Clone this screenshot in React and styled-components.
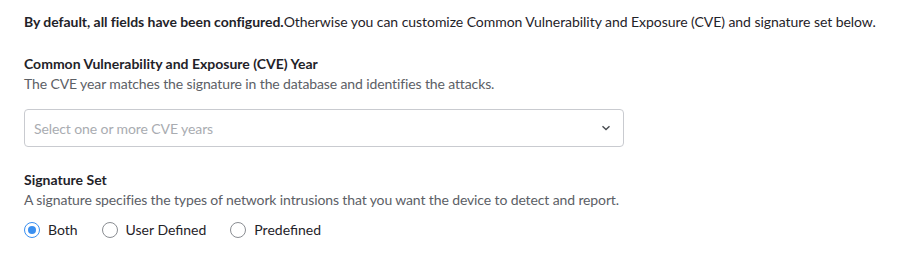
import React, { useState } from 'react'
import styled, { createGlobalStyle } from 'styled-components'

const GlobalStyle = createGlobalStyle`
  body {
    margin: 0;
    background: #fff;
    font-family: Lato, "Open Sans", sans-serif;
    color: #1f2329;
  }
`

const Page = styled.div`
  padding: 13px 24px 0 24px;
  width: 919px;
  box-sizing: border-box;
`

const Intro = styled.p`
  margin: 0;
  font-size: 14px;
  line-height: 18px;
  letter-spacing: -0.05px;
  b {
    font-weight: 700;
  }
`

const Field = styled.div`
  margin-top: ${(props) => props.gap}px;
`

const Label = styled.div`
  font-size: 14px;
  font-weight: 700;
  line-height: 18px;
  color: #1f2329;
`

const Help = styled.div`
  font-size: 14px;
  line-height: 18px;
  margin-top: 2px;
  letter-spacing: -0.12px;
  color: #5c6066;
`

const Select = styled.div`
  margin-top: 16px;
  width: 600px;
  height: 38px;
  box-sizing: border-box;
  border: 1px solid #c9cbd0;
  border-radius: 4px;
  display: flex;
  align-items: center;
  justify-content: space-between;
  padding: 0 12px 0 9px;
  font-size: 14px;
  letter-spacing: -0.1px;
  color: #a9acb1;
  cursor: pointer;
`

const RadioRow = styled.div`
  display: flex;
  gap: 24px;
  margin-top: 12px;
`

const RadioOption = styled.label`
  display: flex;
  align-items: center;
  gap: 8px;
  font-size: 14px;
  color: #1f2329;
  cursor: pointer;
`

const Circle = styled.span`
  width: 16px;
  height: 16px;
  box-sizing: border-box;
  border-radius: 50%;
  border: 1px solid ${(props) => (props.checked ? '#3a8ff0' : '#8a8d92')};
  display: flex;
  align-items: center;
  justify-content: center;
  &::after {
    content: '';
    width: 8px;
    height: 8px;
    border-radius: 50%;
    background: #3a8ff0;
    display: ${(props) => (props.checked ? 'block' : 'none')};
  }
`

const options = ['Both', 'User Defined', 'Predefined']

const App = () => {
  const [sig, setSig] = useState('Both')

  return (
    <Page>
      <GlobalStyle />
      <Intro>
        <b>By default, all fields have been configured.</b>Otherwise you can customize Common
        Vulnerability and Exposure (CVE) and signature set below.
      </Intro>

      <Field gap={24}>
        <Label>Common Vulnerability and Exposure (CVE) Year</Label>
        <Help>The CVE year matches the signature in the database and identifies the attacks.</Help>
        <Select>
          <span>Select one or more CVE years</span>
          <svg width="10" height="6" viewBox="0 0 10 6" fill="none">
            <path d="M1.5 1.2 5 4.6 8.5 1.2" stroke="#4a4d52" strokeWidth="1.4" />
          </svg>
        </Select>
      </Field>

      <Field gap={24}>
        <Label>Signature Set</Label>
        <Help>A signature specifies the types of network intrusions that you want the device to detect and report.</Help>
        <RadioRow>
          {options.map((opt) => (
            <RadioOption key={opt} onClick={() => setSig(opt)}>
              <Circle checked={sig === opt} />
              {opt}
            </RadioOption>
          ))}
        </RadioRow>
      </Field>
    </Page>
  )
}

export default App
